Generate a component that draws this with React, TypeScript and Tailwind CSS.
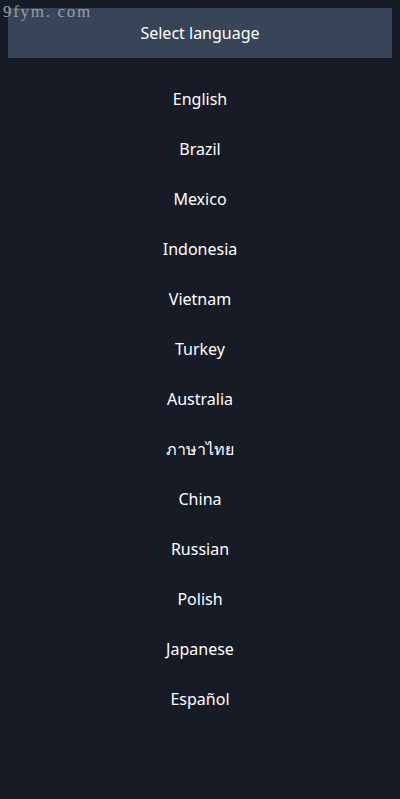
import React from "react";

const languages = [
  "English",
  "Brazil",
  "Mexico",
  "Indonesia",
  "Vietnam",
  "Turkey",
  "Australia",
  "ภาษาไทย",
  "China",
  "Russian",
  "Polish",
  "Japanese",
  "Español",
];

export default function App() {
  return (
    <div className="relative min-h-[799px] w-[400px] bg-[#171b26] p-2 font-['Noto_Sans',sans-serif] text-white">
      {/* watermark */}
      <div className="absolute left-[3px] top-[2px] font-['Liberation_Serif',serif] text-[17px] leading-5 tracking-[1.7px] text-[#9a9ea6]">
        9fym. com
      </div>

      <div className="flex h-[50px] items-center justify-center bg-[#384458] text-[16px]">
        Select language
      </div>

      <div className="mt-4 flex flex-col">
        {languages.map((lang) => (
          <div
            key={lang}
            className="flex h-[50px] items-center justify-center text-[16px]"
          >
            {lang}
          </div>
        ))}
      </div>
    </div>
  );
}
